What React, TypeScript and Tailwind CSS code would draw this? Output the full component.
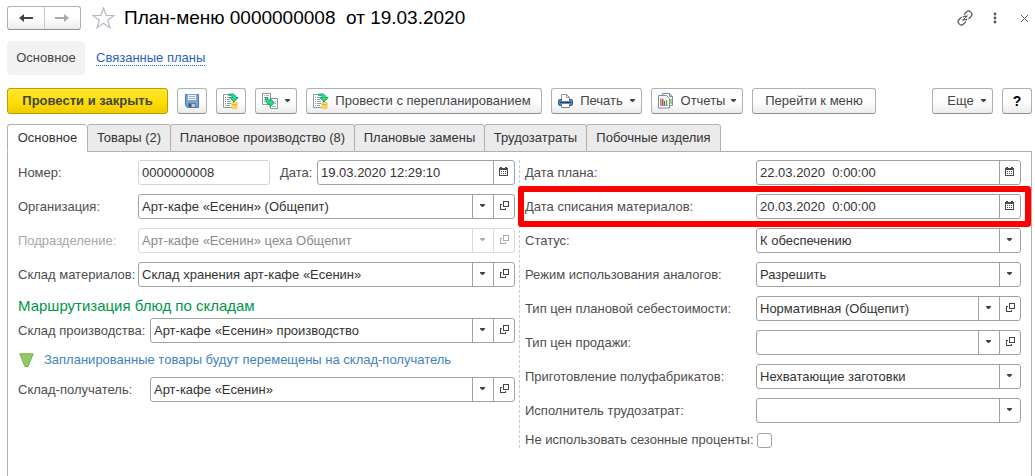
import type { ReactNode } from "react";

const labelText = "whitespace-nowrap text-[#4d4d4d]";

function Caret({ className = "" }: { className?: string }) {
  return (
    <svg width="5" height="5" viewBox="0 0 5 5" className={className} aria-hidden="true">
      <path d="M0 0h5v1L3 3H2L0 1z" fill="currentColor" />
    </svg>
  );
}

function CalendarIcon() {
  return (
    <svg width="9" height="11" viewBox="0 0 9 11" aria-hidden="true" shapeRendering="crispEdges">
      <path d="M1 0h2v1h3V0h2v1h1v8H0V1h1z" fill="#4a4a4a" />
      <path d="M1 3h7v5H1z" fill="#fff" />
      <path d="M2 4h1v1H2zM4 4h1v1H4zM6 4h1v1H6zM2 6h1v1H2zM4 6h1v1H4zM6 6h1v1H6z" fill="#4a4a4a" />
    </svg>
  );
}

function OpenIcon() {
  return (
    <svg width="9" height="11" viewBox="0 0 9 11" fill="none" stroke="currentColor" aria-hidden="true" shapeRendering="crispEdges">
      <path d="M3.5 .5h5v5h-5zM2 3.5H.5v5h5V7" />
    </svg>
  );
}

function SaveIcon() {
  return (
    <svg width="14" height="14" viewBox="0 0 14 14" aria-hidden="true">
      <path d="M.5.5h13v13h-11l-2-2z" fill="#74a4d8" stroke="#4b7aae" />
      <path d="M2.500.5h9v6h-9z" fill="#f6f9fc" stroke="#7fa3c9" />
      <path d="M4 2.500h6M4 4.500h6" stroke="#8fb0cf" />
      <path d="M3.500 9.500h7v4h-7z" fill="#c3c8cc" stroke="#5c7894" />
      <path d="M4 10h2.500v3H4z" fill="#2f5d93" />
    </svg>
  );
}

function PostIcon() {
  return (
    <svg width="16" height="17" viewBox="0 0 16 17" aria-hidden="true">
      <path d="M.5 1.500h10v13H.5z" fill="#fff" stroke="#8c99a5" />
      <path d="M2 4.500h1M4 4.500h3M2 6.500h1M4 6.500h3M2 8.500h1M4 8.500h4M2 10.500h1M4 10.500h4M2 12.500h1M4 12.500h3" stroke="#8c99a5" />
      <path d="M5.500 1.300C10 .2 12.700 1.600 12.800 4.500h2.400L11 9 6.800 4.500h2.700C9.400 2.900 8 2.200 5.500 2.300z" fill="#24dc82" stroke="#0a9355" strokeWidth=".8" strokeLinejoin="round" />
      <path d="M8.500 10.300v4.700c0 1.800 6 1.800 6 0v-4.700z" fill="#efb92f" />
      <path d="M8.500 12.300c1 1.200 5 1.200 6 0M8.500 14.300c1 1.200 5 1.200 6 0" stroke="#fff0b4" strokeWidth=".9" fill="none" />
      <ellipse cx="11.500" cy="10.500" rx="3" ry="1.100" fill="#ffdc67" stroke="#d59a1d" strokeWidth=".5" />
    </svg>
  );
}

function CreateFromIcon() {
  return (
    <svg width="17" height="17" viewBox="0 0 17 17" aria-hidden="true">
      <path d="M.5.5h8v11h-8z" fill="#fff" stroke="#8797a4" />
      <path d="M2 2.500h1M4 2.500h3M2 4.500h1M2 6.500h1M2 8.500h1" stroke="#a2aeb8" />
      <path d="M8.500 5.500h7v10h-7z" fill="#fff" stroke="#8797a4" />
      <path d="M13 8.500h1M13 10.500h1M10 13.500h4" stroke="#a2aeb8" />
      <path d="M3.500 4.500h2.400c0 2.200.6 3.100 2.100 3.300V5.500l4.500 4.200L8 14v-2.600c-3.300-.1-4.700-2.400-4.500-6.900z" fill="#24dc82" stroke="#0a9355" strokeWidth=".8" strokeLinejoin="round" />
    </svg>
  );
}

function PrinterIcon() {
  return (
    <svg width="15" height="15" viewBox="0 0 15 15" aria-hidden="true">
      <path d="M3.500 7V.5h5l3 3V7" fill="#fff" stroke="#8696a5" />
      <path d="M8.500.5v3h3" fill="none" stroke="#8696a5" />
      <rect x=".5" y="5.500" width="14" height="6" rx="1.500" fill="#5685b3" stroke="#315b86" />
      <path d="M4 5h7v2H4z" fill="#fff" />
      <path d="M2 8.500h11" stroke="#234565" />
      <path d="M3.500 9.500h8v4h-8z" fill="#fff" stroke="#758595" />
    </svg>
  );
}

function ReportsIcon() {
  return (
    <svg width="17" height="16" viewBox="0 0 17 16" aria-hidden="true">
      <path d="M4.500.5h7l3 3v9h-10z" fill="#fff" stroke="#7c8c9a" />
      <path d="M11.500.5v3h3" fill="none" stroke="#7c8c9a" />
      <path d="M13 6v5" stroke="#3ca832" />
      <path d="M.5 2.500h8l3 3v9.500H.5z" fill="#fff" stroke="#7c8c9a" />
      <path d="M2.500 5v7.500h7" fill="none" stroke="#8c9aa5" />
      <path d="M4.500 6v6" stroke="#e53b2c" strokeWidth="2" />
      <path d="M6.500 8v4" stroke="#3d6eaa" />
      <path d="M8.500 7v5" stroke="#48b436" strokeWidth="1.500" />
    </svg>
  );
}

function ToolButton({ children, className = "", label }: { children: ReactNode; className?: string; label?: string }) {
  return (
    <button
      type="button"
      aria-label={label}
      className={`flex h-[26px] shrink-0 items-center justify-center whitespace-nowrap rounded-[3px] border border-[#b0b0b0] border-b-[#8f8f8f] bg-linear-to-b from-white from-50% to-[#ececec] text-[#444] ${className}`}
    >
      {children}
    </button>
  );
}

const frame = "flex h-[25px] min-w-0 rounded-[3px] border bg-white";
const boxButton = "flex w-[21px] shrink-0 items-center justify-center border-l";

function DateField({ id, value, className = "" }: { id: string; value: string; className?: string }) {
  return (
    <div className={`${frame} border-[#a0a0a0] ${className}`}>
      <input id={id} type="text" defaultValue={value} className="w-0 flex-1 bg-transparent pl-[3px] text-[#333] outline-none" />
      <button type="button" aria-label="Выбрать дату" className={`${boxButton} border-[#a0a0a0] pr-px`}>
        <CalendarIcon />
      </button>
    </div>
  );
}

function SelectField({ id, value, open = false, disabled = false }: { id: string; value: string; open?: boolean; disabled?: boolean }) {
  const line = disabled ? "border-[#d9d9d9]" : "border-[#a0a0a0]";
  const icon = disabled ? "text-[#aaa]" : "text-[#444]";
  return (
    <div className={`${frame} ${line}`}>
      <div className="grid min-w-0 flex-1 grid-cols-[minmax(0,1fr)_21px]">
        <select
          id={id}
          disabled={disabled}
          defaultValue={value}
          className={`col-span-2 col-start-1 row-start-1 w-full appearance-none bg-transparent pl-[3px] pr-6 opacity-100 outline-none ${disabled ? "text-[#8a8a8a]" : "text-[#333]"}`}
        >
          <option>{value}</option>
        </select>
        <span className={`pointer-events-none col-start-2 row-start-1 flex items-center justify-center border-l pr-px ${line} ${icon}`}>
          <Caret />
        </span>
      </div>
      {open && (
        <button type="button" disabled={disabled} aria-label="Открыть" className={`${boxButton} ${line} ${icon}`}>
          <OpenIcon />
        </button>
      )}
    </div>
  );
}

function Row({ id, label, cols, muted = false, children }: { id: string; label: string; cols: string; muted?: boolean; children: ReactNode }) {
  return (
    <div className={`grid items-center ${cols}`}>
      <label htmlFor={id} className={muted ? "whitespace-nowrap text-[#a6a6a6]" : labelText}>
        {label}
      </label>
      {children}
    </div>
  );
}

const leftCols = "grid-cols-[120px_minmax(0,1fr)]";
const groupCols = "grid-cols-[132px_minmax(0,1fr)]";
const rightCols = "grid-cols-[231px_minmax(0,1fr)]";

const tabs = [
  { name: "Основное", width: "w-20" },
  { name: "Товары (2)", width: "w-[84px]" },
  { name: "Плановое производство (8)", width: "w-[185px]" },
  { name: "Плановые замены", width: "w-[131px]" },
  { name: "Трудозатраты", width: "w-[103px]" },
  { name: "Побочные изделия", width: "w-[135px]" },
];

export default function App() {
  return (
    <div className="flex min-h-screen flex-col bg-white pl-[7px] pr-[3px] pt-1.5 font-['Liberation_Sans',Arial,sans-serif] text-[13px] leading-4">
      <header className="flex h-6 items-center">
        <div className="flex h-6 w-[74px] rounded-[3px] border border-[#b0b0b0] border-b-[#8f8f8f] bg-linear-to-b from-white from-50% to-[#ececec]">
          <button type="button" aria-label="Назад" className="flex flex-1 items-center justify-center border-r border-[#c8c8c8] text-[#444]">
            <svg width="14" height="10" viewBox="0 0 14 10" aria-hidden="true">
              <path d="M0 5l5-4v3h9v2H5v3z" fill="currentColor" />
            </svg>
          </button>
          <button type="button" aria-label="Вперед" className="flex flex-1 items-center justify-center text-[#aaa]">
            <svg width="14" height="10" viewBox="0 0 14 10" aria-hidden="true">
              <path d="M14 5L9 1v3H0v2h9v3z" fill="currentColor" />
            </svg>
          </button>
        </div>
        <button type="button" aria-label="В избранное" className="ml-[11px]">
          <svg width="23" height="22" viewBox="0 0 23 22" aria-hidden="true">
            <path d="M11.500 1l2.600 7.300 7.900.2-6.300 4.700 2.300 7.600-6.500-4.500L5 20.800l2.300-7.600L1 8.500l7.900-.2z" fill="#fff" stroke="#b3bac2" strokeWidth="1.200" />
          </svg>
        </button>
        <h1 className="ml-[9px] whitespace-pre text-[19px] leading-6 text-black">{"План-меню 0000000008  от 19.03.2020"}</h1>
        <div className="ml-auto flex items-center text-[#555]">
          <button type="button" aria-label="Ссылка" className="mr-5">
            <svg width="16" height="16" viewBox="0 0 16 16" fill="none" stroke="currentColor" strokeWidth="1.200" strokeLinecap="round" aria-hidden="true">
              <path d="M7.300 4.200l2.200-2.200c2.800-2.800 7.300 1.500 4.500 4.500l-2.200 2.200M8.700 11.800L6.500 14c-2.800 2.800-7.300-1.500-4.500-4.500l2.200-2.200M5.800 10.200l1.600-1.600M8.600 7.400l1.600-1.600M7 9.800c.9.300 2 .1 2.800-.6M9 6.200c-.9-.3-2-.1-2.800.6" />
            </svg>
          </button>
          <button type="button" aria-label="Меню" className="mr-6">
            <svg width="4" height="12" viewBox="0 0 4 12" fill="currentColor" aria-hidden="true">
              <circle cx="2" cy="2" r="1.400" />
              <circle cx="2" cy="6" r="1.400" />
              <circle cx="2" cy="10" r="1.400" />
            </svg>
          </button>
          <button type="button" aria-label="Закрыть" className="mr-1">
            <svg width="7" height="7" viewBox="0 0 7 7" stroke="currentColor" aria-hidden="true">
              <path d="M0 0l7 7M7 0L0 7" />
            </svg>
          </button>
        </div>
      </header>

      <nav className="mt-[11px] flex items-center gap-[11px]">
        <a href="#main" className="flex h-[34px] w-[78px] items-center justify-center rounded-[4px] bg-[#f2f2f2] text-[#444]">
          Основное
        </a>
        <a href="#plans" className="border-b border-dotted border-[#2b5fc4] leading-[14px] text-[#2b5fc4]">
          Связанные планы
        </a>
      </nav>

      <div className="mt-[13px] flex gap-[9px]" role="toolbar">
        <button
          type="button"
          className="h-[26px] w-[161px] shrink-0 rounded-[3px] border border-[#b89e00] bg-linear-to-b from-[#ffe72e] via-[#ffdf00] to-[#efcb00] font-bold text-[#444]"
        >
          Провести и закрыть
        </button>
        <ToolButton className="w-[30px]" label="Записать"><SaveIcon /></ToolButton>
        <ToolButton className="w-[30px]" label="Провести"><PostIcon /></ToolButton>
        <ToolButton className="w-[42px] gap-[6px]" label="Создать на основании"><CreateFromIcon /><Caret /></ToolButton>
        <ToolButton className="w-[236px] gap-[6px] pr-1"><PostIcon />Провести с перепланированием</ToolButton>
        <ToolButton className="w-[91px] gap-[7px]"><PrinterIcon />Печать<Caret /></ToolButton>
        <ToolButton className="w-[92px] gap-[6px]"><ReportsIcon />Отчеты<Caret /></ToolButton>
        <ToolButton className="w-[124px]">Перейти к меню</ToolButton>
        <ToolButton className="ml-auto w-[61px] gap-[7px] pl-2">Еще<Caret /></ToolButton>
        <ToolButton className="w-[30px]"><span className="text-[14px] font-bold text-black">?</span></ToolButton>
      </div>

      <main className="mt-[10px] flex flex-1 flex-col">
        <div role="tablist" className="flex">
          {tabs.map((tab, i) => (
            <button
              key={tab.name}
              type="button"
              role="tab"
              aria-selected={i === 0}
              className={`${tab.width} h-7 shrink-0 whitespace-nowrap rounded-t-[3px] border border-[#b0b0b0] ${
                i === 0 ? "border-r-0 border-b-white bg-white" : "-mr-px bg-[#ebebeb]"
              } text-[#333]`}
            >
              {tab.name}
            </button>
          ))}
          <div className="flex-1 border-b border-[#b0b0b0]" />
        </div>

        <div className="grid flex-1 grid-cols-[497fr_502fr] content-start gap-x-1 border-x border-[#b0b0b0] px-[10px] pt-2">
          <section className="flex min-w-0 flex-col gap-[9px]">
            <div className={`grid items-center ${leftCols}`}>
              <label htmlFor="number" className={labelText}>Номер:</label>
              <div className="flex items-center">
                <input
                  id="number"
                  type="text"
                  readOnly
                  defaultValue="0000000008"
                  className="h-[25px] w-[132px] rounded-[3px] border border-[#d4d4d4] bg-white pl-[3px] text-[#333] outline-none"
                />
                <label htmlFor="date" className={`ml-[10px] w-[37px] ${labelText}`}>Дата:</label>
                <DateField id="date" value="19.03.2020 12:29:10" className="flex-1" />
              </div>
            </div>
            <Row id="org" label="Организация:" cols={leftCols}>
              <SelectField id="org" value="Арт-кафе «Есенин» (Общепит)" open />
            </Row>
            <Row id="dept" label="Подразделение:" cols={leftCols} muted>
              <SelectField id="dept" value="Арт-кафе «Есенин» цеха Общепит" open disabled />
            </Row>
            <Row id="stock" label="Склад материалов:" cols={leftCols}>
              <SelectField id="stock" value="Склад хранения арт-кафе «Есенин»" open />
            </Row>
            <div className="flex flex-col">
              <h2 className="h-[22px] text-[15px] leading-5 text-[#009646]">Маршрутизация блюд по складам</h2>
              <Row id="prod" label="Склад производства:" cols={groupCols}>
                <SelectField id="prod" value="Арт-кафе «Есенин» производство" open />
              </Row>
              <div className="flex h-[34px] items-center gap-[10px] pl-px text-[#4182bd]">
                <svg width="15" height="15" viewBox="0 0 15 15" aria-hidden="true">
                  <path d="M.8.800h13.400L9 13.500H6z" fill="#8fca62" stroke="#79ad54" strokeLinejoin="round" />
                </svg>
                <span className="whitespace-nowrap">Запланированные товары будут перемещены на склад-получатель</span>
              </div>
              <Row id="dest" label="Склад-получатель:" cols={groupCols}>
                <SelectField id="dest" value="Арт-кафе «Есенин»" open />
              </Row>
            </div>
          </section>

          <section className="flex min-w-0 flex-col gap-[9px] border-l border-dashed border-[#ccc] pl-[5px]">
            <Row id="plan-date" label="Дата плана:" cols={rightCols}>
              <DateField id="plan-date" value="22.03.2020  0:00:00" />
            </Row>
            <div className="relative">
              <Row id="writeoff-date" label="Дата списания материалов:" cols={rightCols}>
                <DateField id="writeoff-date" value="20.03.2020  0:00:00" />
              </Row>
              <div className="pointer-events-none absolute -inset-y-2 -left-[7px] -right-[10px] rounded-[3px] border-6 border-[#fe0000]" />
            </div>
            <Row id="status" label="Статус:" cols={rightCols}>
              <SelectField id="status" value="К обеспечению" />
            </Row>
            <Row id="analogs" label="Режим использования аналогов:" cols={rightCols}>
              <SelectField id="analogs" value="Разрешить" />
            </Row>
            <Row id="cost" label="Тип цен плановой себестоимости:" cols={rightCols}>
              <SelectField id="cost" value="Нормативная (Общепит)" open />
            </Row>
            <Row id="price" label="Тип цен продажи:" cols={rightCols}>
              <SelectField id="price" value="" open />
            </Row>
            <Row id="semi" label="Приготовление полуфабрикатов:" cols={rightCols}>
              <SelectField id="semi" value="Нехватающие заготовки" />
            </Row>
            <Row id="worker" label="Исполнитель трудозатрат:" cols={rightCols}>
              <SelectField id="worker" value="" />
            </Row>
            <div className="flex h-4 items-center">
              <label htmlFor="season" className={`w-[232px] ${labelText}`}>Не использовать сезонные проценты:</label>
              <input id="season" type="checkbox" className="size-[15px] appearance-none rounded-[3px] border border-[#a0a0a0] bg-white" />
            </div>
          </section>
        </div>
      </main>
    </div>
  );
}
